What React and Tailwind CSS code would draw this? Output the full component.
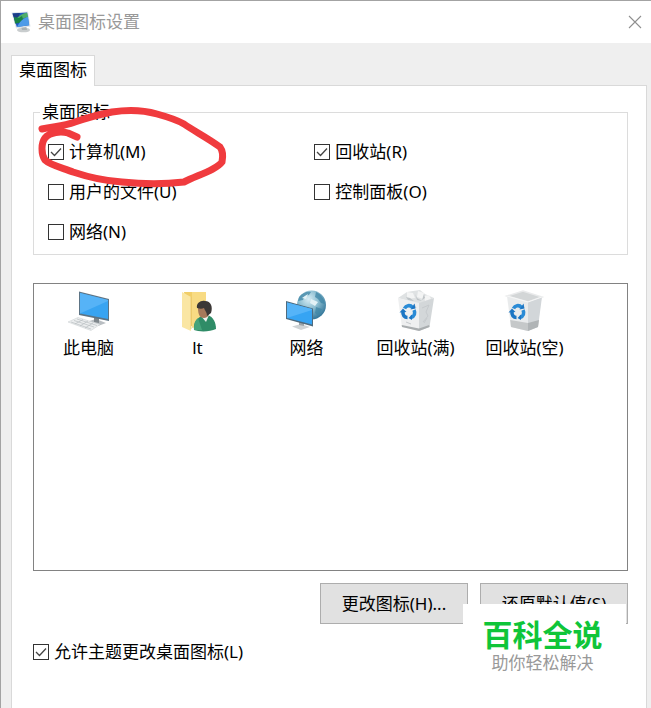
import { useState } from 'react'
import { clsx } from 'clsx'

export default function App() {
  const [selected, setSelected] = useState(null)

  return (
    <div className="flex min-h-screen flex-col border-t border-l border-[#a3a3a3] bg-[#efefef] font-['Noto_Sans','Noto_Sans_CJK_SC',sans-serif] text-[17px] leading-6 text-black">
      {/* Title bar */}
      <header className="flex h-[42px] shrink-0 items-center justify-between bg-white pr-2 pl-[10px]">
        <div className="flex items-center gap-[7px]">
          <TitleIcon />
          <h1 className="text-[#999999]">桌面图标设置</h1>
        </div>
        <button type="button" aria-label="关闭" className="flex size-4 items-center justify-center text-[#8f8f8f]">
          <svg viewBox="0 0 16 16" className="size-4" fill="none" stroke="currentColor" strokeWidth="1.1">
            <path d="M2 2L14 14M14 2L2 14" />
          </svg>
        </button>
      </header>

      <div className="flex grow flex-col pt-3 pr-1 pl-[10px]">
        <div role="tablist" className="z-10 -mb-px flex">
          <button type="button" role="tab" aria-selected="true" className="h-[31px] border border-b-0 border-[#d9d9d9] bg-white px-[7px] pb-[2px]">
            桌面图标
          </button>
        </div>

        <main role="tabpanel" className="grow border border-b-0 border-[#d9d9d9] bg-white pt-[14px] pr-[18px] pb-10 pl-[21px]">
          <div className="relative">
            <fieldset className="border border-[#dcdcdc] pl-[14px]">
              <legend className="-ml-2 px-[2px]">桌面图标</legend>
              <div className="grid grid-cols-[46%_1fr] gap-y-4 pt-4 pb-[10px]">
                <Check label="计算机(M)" defaultChecked />
                <Check label="回收站(R)" defaultChecked />
                <Check label="用户的文件(U)" />
                <Check label="控制面板(O)" />
                <Check label="网络(N)" />
              </div>
            </fieldset>
            {/* Hand-drawn circle over the first option */}
            <svg viewBox="33 100 200 100" className="pointer-events-none absolute top-0 left-0 h-[100px] w-[200px] overflow-visible" fill="none" stroke="#f03b3e" strokeWidth="7" strokeLinecap="round" strokeLinejoin="round">
              <path d="M42 129C54 126 62 127 75 122C89 117 102 114 112 112C125 110 143 110 157 114C168 117 177 120 184 124C194 131 208 138 220 147C223 151 223 157 222 162C216 170 198 175 184 182C166 184 142 184 122 182C106 181 88 177 73 172C63 168 50 165 45 160C41 154 41 143 45 138C50 132 61 131 68 133L77 137" />
            </svg>
          </div>

          <ul className="mt-7 flex h-[288px] flex-wrap content-start border border-[#828282] pt-[5px]">
            {icons.map(({ label, Icon }) => (
              <li key={label} className="w-[109px]">
                <button type="button" onClick={() => setSelected(label)} className={clsx('flex w-full flex-col items-center', selected === label && 'bg-[#cce8ff]')}>
                  <Icon />
                  <span className="mt-[3px]">{label}</span>
                </button>
              </li>
            ))}
          </ul>

          <div className="relative mt-3 flex justify-end gap-3">
            <button type="button" className="h-[41px] w-[148px] border border-[#adadad] bg-[#e1e1e1]">更改图标(H)...</button>
            <button type="button" className="h-[41px] w-[148px] border border-[#adadad] bg-[#e1e1e1]">还原默认值(S)</button>
            <div className="absolute top-[21px] right-[2px] flex w-[163px] flex-col items-center bg-white pt-[14px] pr-1 pb-2 font-['Liberation_Sans','Noto_Sans_CJK_SC',sans-serif]">
              <strong className="text-[30px] leading-9 font-bold text-[#0fc539]">百科全说</strong>
              <span className="leading-5 text-[#999999]">助你轻松解决</span>
            </div>
          </div>

          <div className="mt-4">
            <Check label="允许主题更改桌面图标(L)" defaultChecked />
          </div>
        </main>
      </div>
    </div>
  )
}

function Check({ label, defaultChecked }) {
  return (
    <label className="flex items-center gap-[5px]">
      <span className="grid size-4 shrink-0">
        <input type="checkbox" defaultChecked={defaultChecked} className="peer col-start-1 row-start-1 size-4 appearance-none border border-[#333333] bg-white" />
        <svg viewBox="0 0 16 16" className="pointer-events-none col-start-1 row-start-1 hidden size-4 peer-checked:block" fill="none" stroke="#444444" strokeWidth="1.3">
          <path d="M3 8L6.5 11.5L13 4.5" />
        </svg>
      </span>
      {label}
    </label>
  )
}

function TitleIcon() {
  return (
    <svg viewBox="0 0 20 22" className="h-[22px] w-5">
      <ellipse cx="12.5" cy="19" rx="6.5" ry="2.3" fill="#c9cdce" />
      <path d="M10 15l5-1 1 5h-5z" fill="#a9b1b3" />
      <path d="M.5 1.500L17 .5l2.500 15L5 17.500z" fill="#dde4e9" />
      <path d="M1.500 2.500L16 1.500l2.200 12.700L5.800 16z" fill="#2159c4" />
      <path d="M1.500 2.500L9 2l-3 9-1 2z" fill="#1c3d86" />
      <path d="M10 9.500l7-4.500 1.200 9.200L5.800 16z" fill="#4d9be8" />
      <path d="M6 7c3-3 6-5 10.200-5.300L17 6c-4 0-7 4-11 6z" fill="#4fae6a" />
      <path d="M3 6l5 1 3-2 1 3-4 4-4 .5z" fill="#188445" />
    </svg>
  )
}

function ComputerIcon() {
  return (
    <svg viewBox="0 0 44 44" className="size-11">
      <path d="M19 33l10-3 10 4-8 3z" fill="#b9bec2" />
      <path d="M27 28l5 1v5l-5-1z" fill="#7f878c" />
      <path d="M12 2.500L42 10v22l-30-6z" fill="#5d7485" />
      <path d="M13 4l28 7v19l-28-5.500z" fill="#38a4f2" />
      <path d="M13 4l28 7v1L13 24.500z" fill="#56b3f7" />
      <path d="M1 33l10-4.500 22 7-9 6z" fill="#eceeef" stroke="#cdd1d4" strokeWidth=".6" />
      <path d="M4 33l20 7M7 31.500l20 6.500M10 30l20 6.500M8 35l8-4.500M13 37l8-5M18 39l8-5" stroke="#b9bec1" strokeWidth=".7" />
    </svg>
  )
}

function UserFolderIcon() {
  return (
    <svg viewBox="0 0 44 44" className="size-11">
      <path d="M8 3h22v34H12z" fill="#f1ce68" />
      <path d="M16 3h14v32l-14 4z" fill="#f8db83" />
      <path d="M6 3l9 5v34l-9-4z" fill="#fae6a3" />
      <path d="M15 8v32" stroke="#e6c56e" strokeWidth=".8" />
      <path d="M18 41c-1-8 3-12 8-14l6-1c5 2 8 7 8 14-6 3-17 3-22 1z" fill="#2f8c67" />
      <path d="M18 41c0-6 1-9 4-12l4 12z" fill="#45a47b" />
      <path d="M25 27l8-1-3 7z" fill="#eef1ed" />
      <path d="M22 19c0-4 12-5 12 1 0 5-2 9-6 9-5 0-6-5-6-10z" fill="#a6795a" />
      <path d="M21 19c-1-5 4-8 8-7 6 0 8 6 6 12l-4 3c0-4-2-5-3-8-2 1-4 1-7 0z" fill="#3c3836" />
    </svg>
  )
}

function NetworkIcon() {
  return (
    <svg viewBox="0 0 44 44" className="size-11">
      <defs>
        <radialGradient id="globe" cx=".4" cy=".3" r=".7">
          <stop offset="0" stopColor="#d7edf5" />
          <stop offset=".5" stopColor="#8bbdd0" />
          <stop offset="1" stopColor="#37799c" />
        </radialGradient>
      </defs>
      <circle cx="26.5" cy="16" r="14.500" fill="url(#globe)" />
      <path d="M14 8c3-4 8-6 12-5l-2 3-4 1-2 4-5 1zM31 3c5 2 8 7 9 12l-4-1-3-4-3-2zM31 18l6 2-3 7-4-3z" fill="#3f86a5" opacity=".75" />
      <path d="M17 9l6-4-2 5zM26 10l7 3-3 4-5-3z" fill="#e3f2f6" />
      <path d="M7 37.500l9-2.500 9 3-9 3z" fill="#cfd3d5" />
      <path d="M14 31l5 1v5l-5-1z" fill="#9ca4a9" />
      <path d="M1 12l27 7.500v18L1 30z" fill="#4f6b7e" />
      <path d="M2 13.500L27 20v15.500L2 29z" fill="#36a4f3" />
      <path d="M2 13.500L27 20v1L2 29z" fill="#55b4f8" />
    </svg>
  )
}

// three curved arrows chasing each other
function RecycleMark() {
  return (
    <g>
      <path d="M10.500 19.500c1.500-3 5.500-4 8-1" fill="none" stroke="#2a8bd6" strokeWidth="3.600" />
      <path d="M20 21c1.500 3 .5 6.500-3 7.500" fill="none" stroke="#2a8bd6" strokeWidth="3.600" />
      <path d="M13.500 28.500c-3 0-5-2.500-4.500-6" fill="none" stroke="#1c76c4" strokeWidth="3.600" />
      <path d="M16.500 20.500l5-1-1-5zM18 25.500l-3.500 3.500 3.500 2zM5.500 23.500l3.500-4 3.500 3.500z" fill="#1c76c4" />
    </g>
  )
}

function FullBinIcon() {
  return (
    <svg viewBox="0 0 44 44" className="size-11">
      <path d="M4 9l9-6 6-1 7-1 5 4 9 4-15 6z" fill="#dfe2e3" />
      <path d="M13 3l6 1 2 5-8 1zM24 2l6 2-1 6-6-2zM30 7l5-1 2 4-6 2z" fill="#f3f4f4" />
      <path d="M12 8l4 1 4 3-6-1zM21 5l2 4 5 3-5-1zM30 5l1 4-3 2z" fill="#bfc4c7" />
      <path d="M4 9l21 5v28L8 38z" fill="#eeeff0" />
      <path d="M25 14l15-5-4.500 29L25 42z" fill="#d3d7d9" />
      <path d="M8 38l17 4 10.500-4-.3-2L25 39.500 7.700 36z" fill="#a9adaf" />
      <path d="M28 19l7-3-3 7 2 4-5 6M30 34l3-5M12 33l5 2M20 15l2 4" fill="none" stroke="#c6cacd" />
      <RecycleMark />
    </svg>
  )
}

function EmptyBinIcon() {
  return (
    <svg viewBox="0 0 44 44" className="size-11">
      <path d="M4 7l16-5 19 6-14 5z" fill="#d3d6d7" stroke="#e9eaeb" strokeWidth="1.500" />
      <path d="M4 7l21 6v29L8 38z" fill="#e9ebec" />
      <path d="M25 13l14-5-4 30-10 4z" fill="#d2d6d9" />
      <path d="M7.200 31L25 34v8L8 38z" fill="#c5c8c9" />
      <path d="M25 34l11-3-1 7-10 4z" fill="#b0b4b6" />
      <path d="M4 7l21 6 14-5" fill="none" stroke="#f5f6f6" />
      <RecycleMark />
    </svg>
  )
}

const icons = [
  { label: '此电脑', Icon: ComputerIcon },
  { label: 'lt', Icon: UserFolderIcon },
  { label: '网络', Icon: NetworkIcon },
  { label: '回收站(满)', Icon: FullBinIcon },
  { label: '回收站(空)', Icon: EmptyBinIcon },
]
